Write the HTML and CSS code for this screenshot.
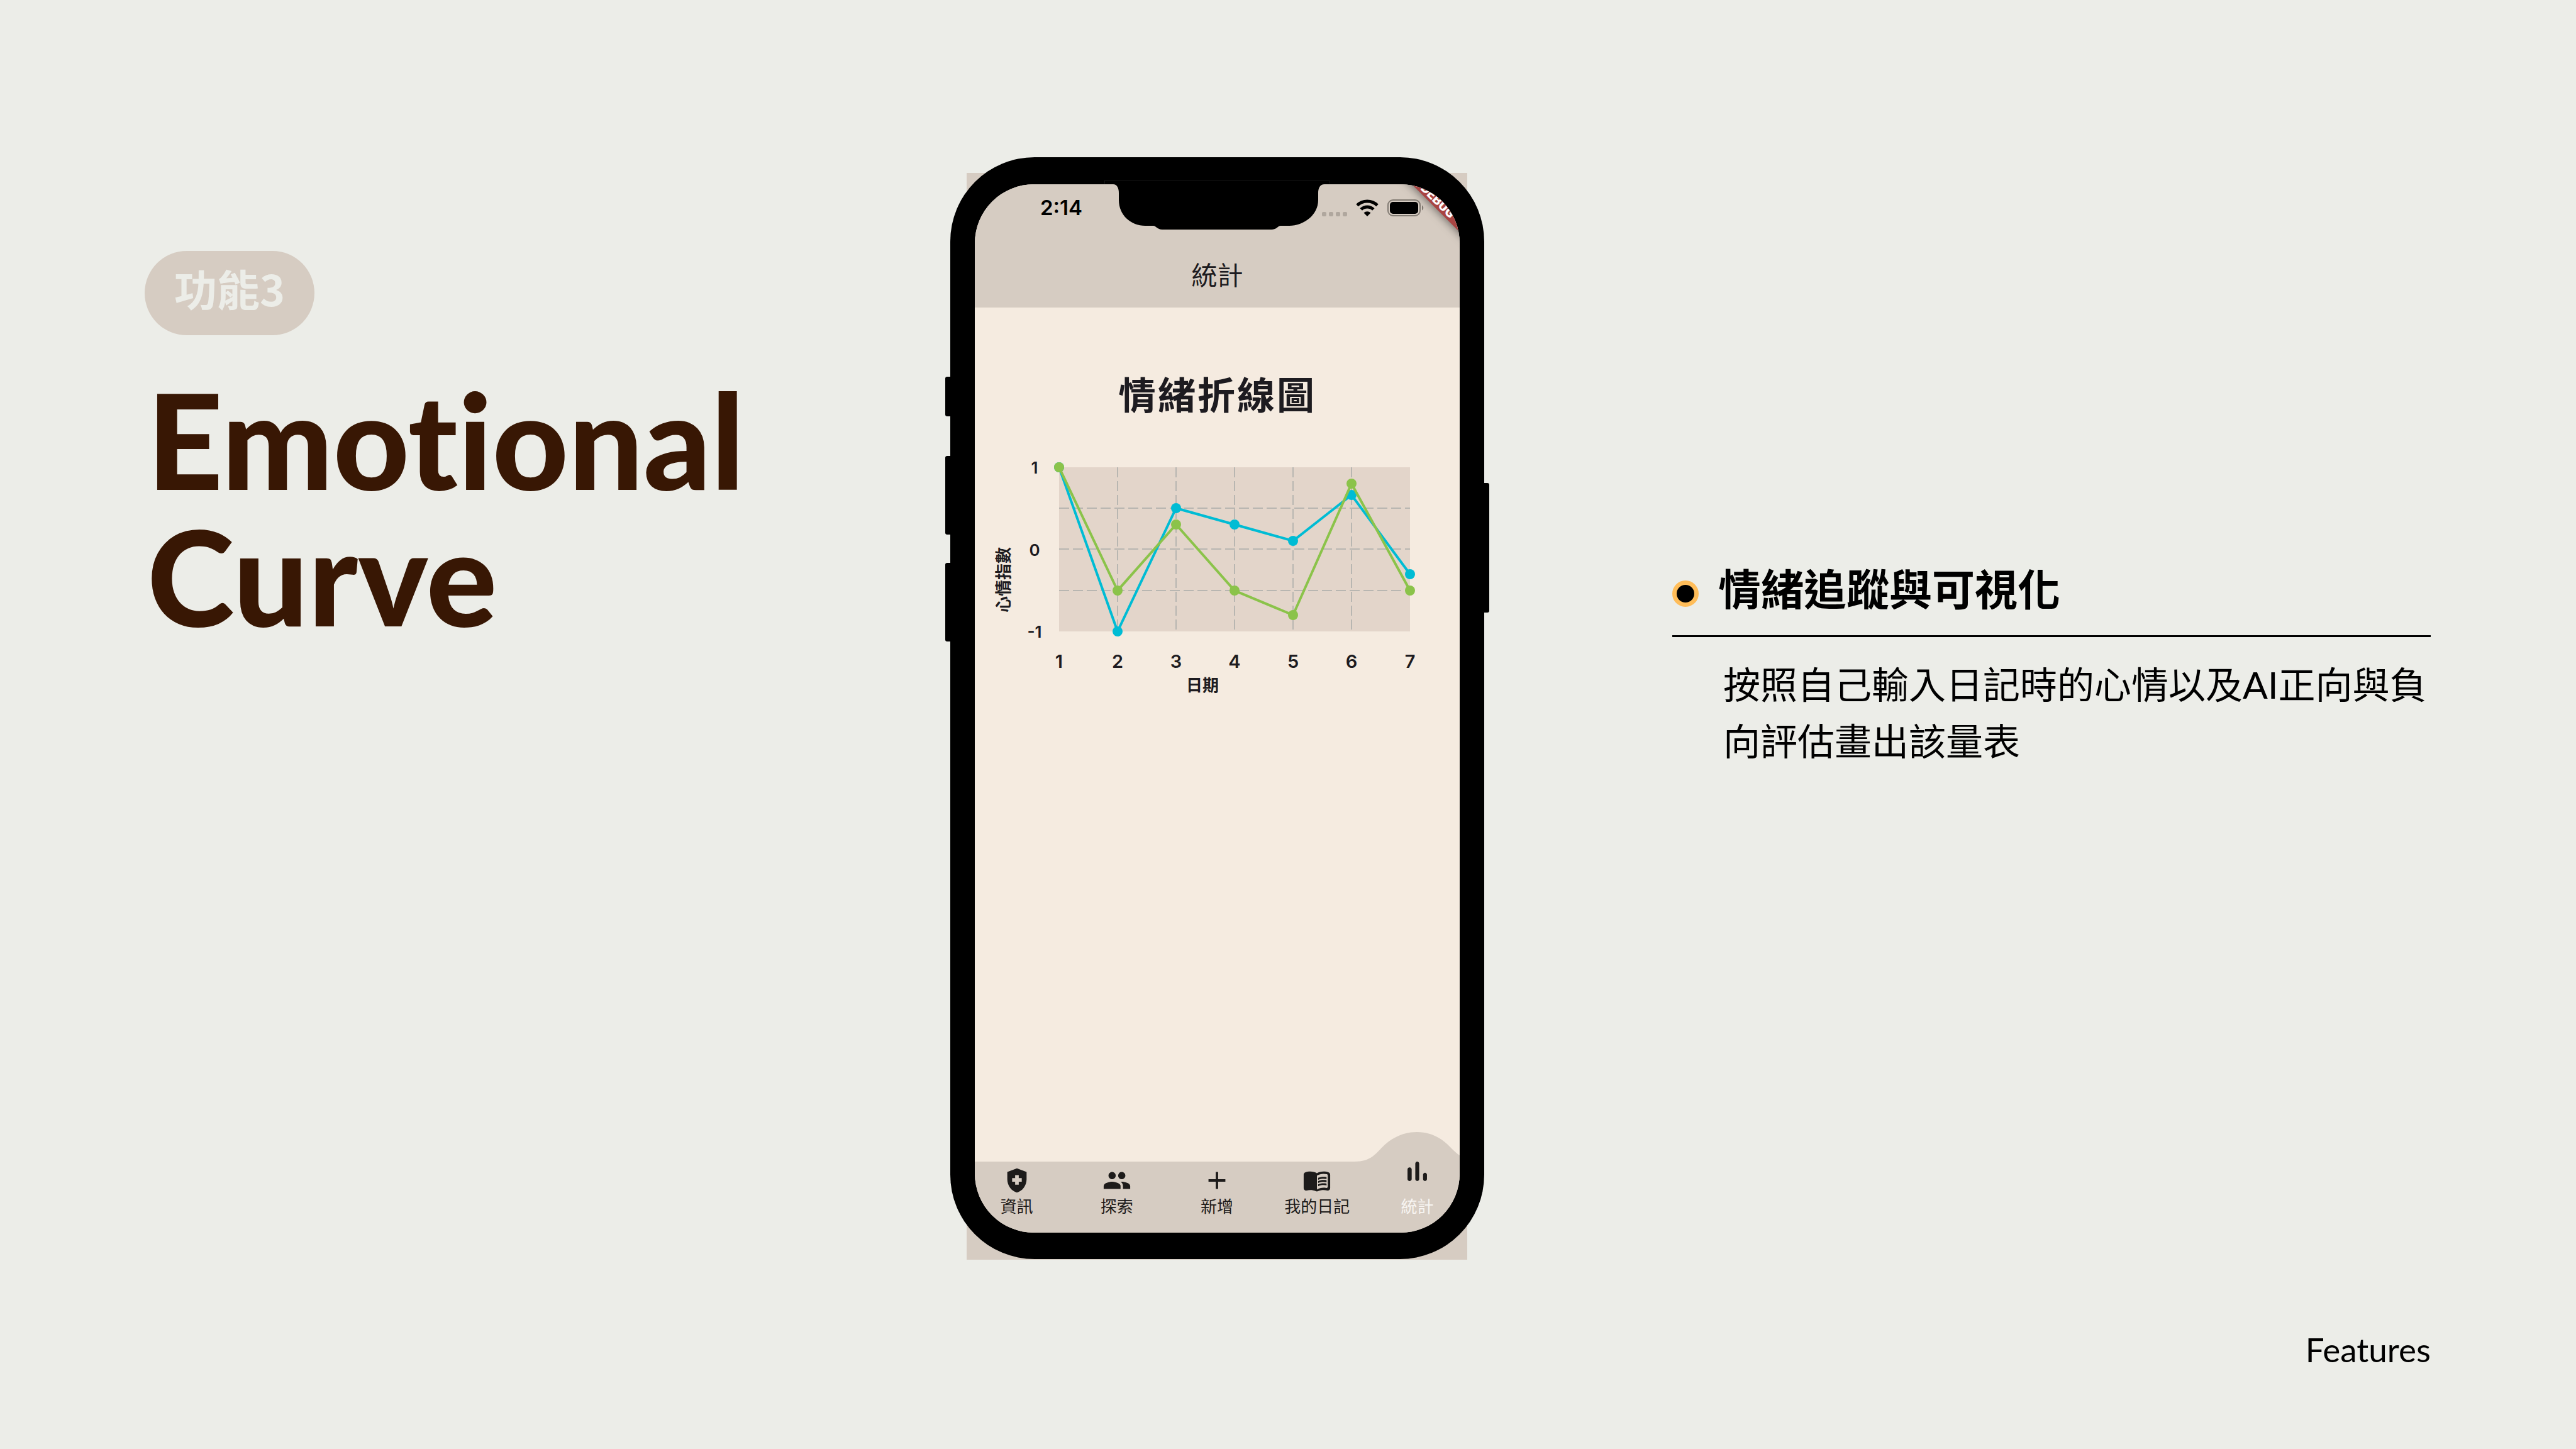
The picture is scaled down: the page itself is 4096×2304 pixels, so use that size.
FILE: index.html
```html
<!DOCTYPE html>
<html lang="zh-Hant">
<head>
<meta charset="utf-8">
<meta name="viewport" content="width=device-width, initial-scale=1">
<title>Emotional Curve</title>
<link rel="stylesheet" href="styles.css">
</head>
<body>
<main class="slide">
  <section class="intro">
    <p class="badge">功能3</p>
    <h1 class="title">Emotional Curve</h1>
  </section>

  <div class="device">
    <span class="key key-mute"></span>
    <span class="key key-up"></span>
    <span class="key key-down"></span>
    <span class="key key-power"></span>
    <div class="phone">
      <div class="screen">
        <header class="top">
          <div class="status">
            <span class="time">2:14</span>
            <span class="signal">
              <svg class="dots" viewBox="0 0 40 27" aria-hidden="true"><g fill="#b0a79e"><rect x="0" y="20" width="7" height="7" rx="2"/><rect x="11" y="20" width="7" height="7" rx="2"/><rect x="22" y="20" width="7" height="7" rx="2"/><rect x="33" y="20" width="7" height="7" rx="2"/></g></svg>
              <svg class="wifi" viewBox="0 0 36 27" aria-hidden="true"><g fill="none" stroke="#000" stroke-width="5"><path d="M2 9.500a23 23 0 0 1 32 0"/><path d="M8.200 16a14 14 0 0 1 19.600 0"/></g><path d="M12.500 21.500a8 8 0 0 1 11 0L18 27z"/></svg>
              <svg class="battery" viewBox="0 0 58 27" aria-hidden="true"><rect x="1" y="1" width="51" height="25" rx="8" fill="none" stroke="#827b73" stroke-width="2"/><rect x="4" y="4" width="45" height="19" rx="5"/><path d="M55 9.500c3 1.500 3 6.500 0 8z" fill="#827b73"/></svg>
            </span>
          </div>
          <h2 class="app-title">統計</h2>
        </header>

        <section class="report">
          <h3 class="chart-title">情緒折線圖</h3>
          <svg class="chart" viewBox="0 0 771 400" role="img" aria-label="情緒折線圖">
            <rect x="134" y="19" width="558" height="261" fill="#e3d5ca"/>
            <g class="grid">
              <path d="M134 84H692M134 149H692M134 215H692"/>
              <path d="M227 19V280M320 19V280M413 19V280M506 19V280M599 19V280"/>
            </g>
            <polyline class="line ai" points="134,19 227,280 320,84 413,110 506,136 599,63 692,189"/>
            <g class="dot-ai"><circle cx="134" cy="19" r="8"/><circle cx="227" cy="280" r="8"/><circle cx="320" cy="84" r="8"/><circle cx="413" cy="110" r="8"/><circle cx="506" cy="136" r="8"/><circle cx="599" cy="63" r="8"/><circle cx="692" cy="189" r="8"/></g>
            <polyline class="line mood" points="134,19 227,215 320,110 413,215 506,254 599,45 692,215"/>
            <g class="dot-mood"><circle cx="134" cy="19" r="8"/><circle cx="227" cy="215" r="8"/><circle cx="320" cy="110" r="8"/><circle cx="413" cy="215" r="8"/><circle cx="506" cy="254" r="8"/><circle cx="599" cy="45" r="8"/><circle cx="692" cy="215" r="8"/></g>
            <g class="tick-y"><text x="95" y="29">1</text><text x="95" y="160">0</text><text x="95" y="290">-1</text></g>
            <g class="tick-x"><text x="134" y="338">1</text><text x="227" y="338">2</text><text x="320" y="338">3</text><text x="413" y="338">4</text><text x="506" y="338">5</text><text x="599" y="338">6</text><text x="692" y="338">7</text></g>
            <text class="axis-name" x="362" y="375">日期</text>
            <text class="axis-name" transform="translate(55 198) rotate(-90)">心情指數</text>
          </svg>
        </section>

        <nav class="tabs">
          <svg class="tabs-shape" viewBox="0 0 796 160" aria-hidden="true"><path d="M0 47H617C642 47 650 35 661 24S690 0 716 0S758 13 769 24S786 40 796 43V160H0Z" fill="#d6ccc2"/></svg>
          <a class="tab" href="#info"><svg viewBox="0 0 24 24" aria-hidden="true"><path d="M10.500 13H8v-3h2.500V7.500h3V10H16v3h-2.500v2.500h-3V13zM12 2L4 5v6.090c0 5.050 3.410 9.760 8 10.910 4.590-1.150 8-5.860 8-10.910V5l-8-3z" fill-rule="evenodd"/></svg>資訊</a>
          <a class="tab" href="#explore"><svg viewBox="0 0 24 24" aria-hidden="true"><path d="M16 11c1.660 0 2.990-1.340 2.990-3S17.660 5 16 5c-1.660 0-3 1.340-3 3s1.340 3 3 3zm-8 0c1.660 0 2.990-1.340 2.990-3S9.660 5 8 5C6.340 5 5 6.340 5 8s1.340 3 3 3zm0 2c-2.330 0-7 1.170-7 3.500V19h14v-2.500c0-2.330-4.670-3.500-7-3.500zm8 0c-.29 0-.62.02-.97.05 1.160.84 1.970 1.970 1.970 3.450V19h6v-2.500c0-2.330-4.670-3.500-7-3.500z"/></svg>探索</a>
          <a class="tab" href="#new"><svg viewBox="0 0 24 24" aria-hidden="true"><path d="M19 13h-6v6h-2v-6H5v-2h6V5h2v6h6v2z"/></svg>新增</a>
          <a class="tab" href="#diary"><svg viewBox="0 0 24 24" aria-hidden="true"><path fill-rule="evenodd" d="M17.500 4.500c-1.950 0-4.050.4-5.500 1.500-1.450-1.100-3.550-1.500-5.500-1.500-1.450 0-2.990.22-4.280.79C1.490 5.620 1 6.330 1 7.140v11.280c0 1.300 1.220 2.260 2.480 1.940.98-.25 2.020-.36 3.020-.36 1.560 0 3.220.26 4.560.92.6.3 1.280.3 1.870 0 1.340-.67 3-.92 4.560-.92 1 0 2.040.11 3.020.36 1.260.33 2.480-.63 2.480-1.940V7.140c0-.81-.49-1.520-1.220-1.850-1.280-.57-2.820-.79-4.270-.79zM21 17.230c0 .63-.58 1.090-1.200.98-.75-.14-1.530-.2-2.300-.2-1.700 0-4.150.65-5.500 1.500V8c1.350-.85 3.800-1.500 5.500-1.500.92 0 1.830.09 2.700.28.46.1.8.51.8.98v9.470z"/><path d="M17.500 10.500c.88 0 1.730.09 2.500.26V9.240c-.79-.15-1.640-.24-2.500-.24-1.700 0-3.240.29-4.500.83v1.660c1.130-.64 2.700-.99 4.500-.99zM13 12.490v1.660c1.130-.64 2.700-.99 4.500-.99.88 0 1.730.09 2.500.26V11.900c-.79-.15-1.640-.24-2.500-.24-1.700 0-3.240.3-4.500.83zM17.500 14.330c-1.700 0-3.240.29-4.500.83v1.660c1.130-.64 2.700-.99 4.500-.99.88 0 1.730.09 2.500.26v-1.520c-.79-.16-1.640-.24-2.500-.24z"/></svg>我的日記</a>
          <a class="tab active" href="#stats" aria-current="page"><svg viewBox="0 0 24 24" aria-hidden="true"><path d="M6.400 9.200h.2c.77 0 1.400.63 1.400 1.400v7c0 .77-.63 1.400-1.400 1.400h-.2c-.77 0-1.400-.63-1.400-1.400v-7c0-.77.63-1.400 1.400-1.400zM12 5c.77 0 1.400.63 1.400 1.400v11.200c0 .77-.63 1.400-1.400 1.400-.77 0-1.400-.63-1.400-1.400V6.400c0-.77.63-1.400 1.400-1.400zm5.600 8c.77 0 1.400.63 1.400 1.400v3.200c0 .77-.63 1.400-1.400 1.400-.77 0-1.400-.63-1.400-1.400v-3.200c0-.77.63-1.400 1.400-1.400z"/></svg>統計</a>
        </nav>

        <svg class="ribbon" viewBox="0 0 140 140" aria-hidden="true">
          <g transform="translate(105 27) rotate(45)">
            <rect class="ribbon-band" x="-100" y="-15" width="200" height="25"/>
            <text x="0" y="6">DEBUG</text>
          </g>
        </svg>
      </div>
      <svg class="notch" viewBox="0 0 358 80" aria-hidden="true">
        <path d="M14 6C20 6 23 12 23 20V31C23 55 42 72 65 72H78C82 72 84 78 92 78H266C274 78 276 72 280 72H294C317 72 340 55 340 31V20C340 12 343 6 350 6Z"/>
        <path d="M0 5V0H358V5" fill="none" stroke="#2c2c2c" stroke-width="1"/>
      </svg>
    </div>
  </div>

  <section class="feature">
    <h2 class="feature-title"><span class="bullet"></span>情緒追蹤與可視化</h2>
    <p class="feature-text">按照自己輸入日記時的心情以及AI正向與負向評估畫出該量表</p>
  </section>
</main>
<footer class="foot">Features</footer>
</body>
</html>
```
FILE: styles.css
```css
* {
  box-sizing: border-box;
}

body {
  margin: 0;
  min-height: 100vh;
  display: flex;
  flex-direction: column;
  justify-content: space-between;
  padding: 250px 231px 128px 230px;
  background: #ecede8;
  color: #000;
  font-family: Lato, "Noto Sans CJK TC", sans-serif;
}

h1, h2, h3, p {
  margin: 0;
}

.slide {
  display: grid;
  grid-template-columns: 982fr 849px 1206fr;
  column-gap: 299px;
  align-items: start;
}

/* Left column */
.intro {
  padding-top: 149px;
}

.badge {
  width: fit-content;
  padding: 0 47px 16px;
  border-radius: 67px;
  background: #d6ccc2;
  color: #ecede8;
  font: 700 68px/118px "Noto Sans CJK TC", sans-serif;
}

.title {
  margin-top: 57px;
  padding-left: 4px;
  color: #381704;
  font-size: 210px;
  font-weight: 900;
  font-variant-ligatures: none;
  line-height: 217px;
}

/* Phone */
.device {
  position: relative;
  background: linear-gradient(#d6ccc2, #d6ccc2) 26px 25px / 796px 1728px no-repeat;
  padding-bottom: 2px;
}

.phone {
  position: relative;
  padding: 43px 39px 42px;
  border-radius: 134px;
  background: #000;
}

.screen {
  position: relative;
  display: flex;
  flex-direction: column;
  min-height: 1667px;
  overflow: hidden;
  border-radius: 94px;
  background: #f5ebe0;
}

.key {
  position: absolute;
  left: -8px;
  width: 12px;
  border-radius: 3px;
  background: #000;
}

.key-mute {
  top: 349px;
  height: 63px;
}

.key-up {
  top: 475px;
  height: 125px;
}

.key-down {
  top: 645px;
  height: 125px;
}

.key-power {
  left: auto;
  right: -8px;
  top: 518px;
  height: 206px;
}

.notch {
  position: absolute;
  top: 37px;
  left: 245px;
  width: 358px;
}

.top {
  height: 196px;
  background: #d6ccc2;
}

.status {
  display: flex;
  justify-content: space-between;
  align-items: center;
  height: 74px;
  padding: 0 57px 0 104px;
}

.time {
  font: 600 33px/40px Inter, sans-serif;
}

.signal {
  display: flex;
  gap: 14px;
}

.signal svg {
  height: 27px;
}

.dots {
  width: 40px;
}

.wifi {
  width: 36px;
}

.battery {
  width: 58px;
}

.app-title {
  color: #1d1b20;
  font: 400 41px/60px "Noto Sans CJK TC", sans-serif;
  margin-top: 38px;
  text-align: center;
}

.ribbon {
  position: absolute;
  top: 0;
  right: 0;
  width: 140px;
  fill: #fff;
  font: 900 21px Roboto, sans-serif;
  text-anchor: middle;
}

.ribbon-band {
  fill: #a94442;
  filter: drop-shadow(0 0 8px rgba(0, 0, 0, 0.6));
}

.report {
  flex: 1;
}

.chart-title {
  padding-top: 92px;
  color: #1d1b20;
  font: 700 60px/88px "Noto Sans CJK TC", sans-serif;
  letter-spacing: 3px;
  text-align: center;
}

.chart {
  display: block;
  width: 100%;
  margin-top: 55px;
  fill: #1d1b20;
  text-anchor: middle;
}

.grid {
  fill: none;
  stroke: #b8b6b1;
  stroke-width: 2;
  stroke-dasharray: 16 6;
}

.line {
  fill: none;
  stroke-width: 4;
}

.ai {
  stroke: #00bcd4;
}

.mood {
  stroke: #8bc34a;
}

.dot-ai {
  fill: #00bcd4;
}

.dot-mood {
  fill: #8bc34a;
}

.tick-y {
  font: 600 26px Inter, sans-serif;
}

.tick-x {
  font: 600 29px Inter, sans-serif;
}

.axis-name {
  font: 700 26px "Noto Sans CJK TC", sans-serif;
}

.tabs {
  position: relative;
  display: grid;
  grid-template-columns: repeat(5, 1fr);
  height: 160px;
  margin: 0 -12px 0 -13px;
}

.tabs-shape {
  position: absolute;
  inset: 0;
  width: 100%;
  height: 100%;
}

.tab {
  position: relative;
  display: flex;
  flex-direction: column;
  align-items: center;
  padding-top: 54px;
  gap: 0;
  color: #1d1b1a;
  font: 400 26px/34px "Noto Sans CJK TC", sans-serif;
  text-decoration: none;
}

.tab svg {
  width: 46px;
  height: 46px;
  fill: #1d1b1a;
}

.tab.active {
  padding-top: 36px;
  gap: 11px;
  color: #f8f5f2;
}

.tab.active svg {
  width: 53px;
  height: 53px;
}

/* Right column */
.feature {
  padding-top: 639px;
}

.feature-title {
  display: flex;
  align-items: center;
  gap: 31px;
  padding-bottom: 31px;
  border-bottom: 3px solid #000;
  font: 700 68px/90px "Noto Sans CJK TC", sans-serif;
}

.bullet {
  width: 42px;
  height: 42px;
  margin-top: 20px;
  border: 7px solid #ffbd59;
  border-radius: 50%;
  background: #000;
}

.feature-text {
  padding: 31px 0 0 81px;
  font-size: 59px;
  line-height: 90px;
}

.foot {
  font-size: 53px;
  line-height: 60px;
  text-align: right;
}
```
